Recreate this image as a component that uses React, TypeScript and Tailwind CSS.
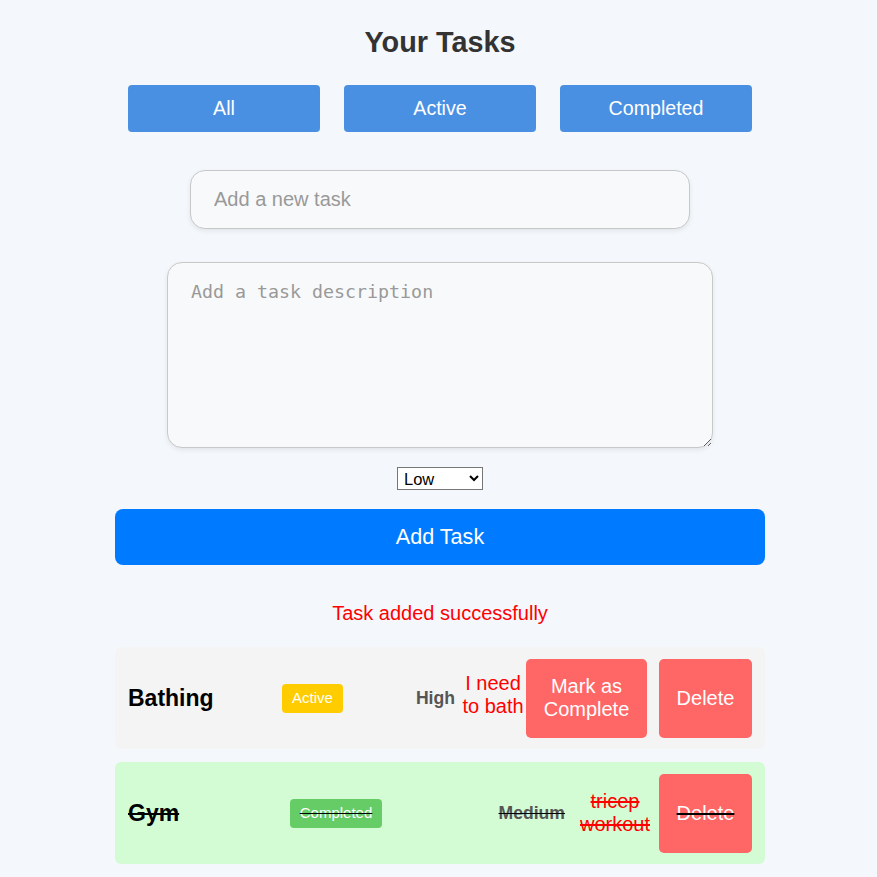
import React, { useState } from 'react';

type Task = {
  title: string;
  status: string;
  priority: string;
  desc: string;
  completed: boolean;
  // per-row column boxes
  titleBox: string;
  badgeBox: string;
  priorityBox: string;
  descBox: string;
  deleteGap: string;
};

const tasks: Task[] = [
  {
    title: 'Bathing',
    status: 'Active',
    priority: 'High',
    desc: 'I need to bath',
    completed: false,
    titleBox: 'w-[154px]',
    badgeBox: 'w-[61px] bg-[#ffcc00]',
    priorityBox: 'w-[118px] pr-[6px]',
    descBox: 'w-[64px] mb-[6px]',
    deleteGap: 'ml-[12px]',
  },
  {
    title: 'Gym',
    status: 'Completed',
    priority: 'Medium',
    desc: 'tricep workout',
    completed: true,
    titleBox: 'w-[162px]',
    badgeBox: 'w-[92px] bg-[#66cc66]',
    priorityBox: 'w-[190px] pr-[7px]',
    descBox: 'w-[86px]',
    deleteGap: 'ml-px',
  },
];

const TaskRow: React.FC<{ task: Task }> = ({ task }) => {
  const strike = task.completed ? 'line-through decoration-black' : '';
  return (
    <li
      className={`flex items-center h-[102px] px-[13px] mb-[13px] rounded-[6px] ${
        task.completed ? 'bg-[#d4fcd4]' : 'bg-[#f4f4f4]'
      }`}
    >
      <span className={`${task.titleBox} shrink-0 text-[23px] font-bold text-black leading-none ${strike}`}>
        {task.title}
      </span>
      <span
        className={`${task.badgeBox} shrink-0 h-[29px] flex items-center justify-center rounded-[4px] text-[15px] text-white ${strike}`}
      >
        {task.status}
      </span>
      <span className={`${task.priorityBox} shrink-0 text-right text-[17.6px] font-bold text-[#555] ${strike}`}>
        {task.priority}
      </span>
      <p
        className={`${task.descBox} shrink-0 text-center text-[20px] leading-[23px] text-[#ff0000] ${
          task.completed ? 'line-through decoration-[#ff0000]' : ''
        }`}
      >
        {task.desc}
      </p>
      {!task.completed && (
        <button className="ml-px w-[121px] h-[79px] shrink-0 rounded-[5px] bg-[#ff6666] text-white text-[20px] leading-[23px]">
          Mark as Complete
        </button>
      )}
      <button
        className={`${task.deleteGap} w-[93px] h-[79px] shrink-0 rounded-[5px] bg-[#ff6666] text-white text-[20px] leading-[23px] ${strike}`}
      >
        Delete
      </button>
    </li>
  );
};

export default function App() {
  const [filter, setFilter] = useState('All');
  const [title, setTitle] = useState('');
  const [desc, setDesc] = useState('');
  const [priority, setPriority] = useState('Low');

  return (
    <div className="min-h-[877px] bg-[#f4f7fc] pl-[3px] pt-[26px] font-['Liberation_Sans',Arial,sans-serif]">
      <div className="w-[650px] mx-auto">
        <h2 className="text-center text-[28.8px] font-bold text-[#333] leading-[33px]">Your Tasks</h2>

        {/* Filters */}
        <div className="flex justify-center gap-[24px] mt-[26px]">
          {['All', 'Active', 'Completed'].map((f) => (
            <button
              key={f}
              onClick={() => setFilter(f)}
              className="w-[192px] h-[47px] rounded-[4px] bg-[#4a90e2] text-white text-[19.6px]"
            >
              {f}
            </button>
          ))}
        </div>

        {/* Form */}
        <input
          type="text"
          value={title}
          onChange={(e) => setTitle(e.target.value)}
          placeholder="Add a new task"
          className="block mx-auto mt-[38px] w-[500px] h-[59px] px-[23px] rounded-[15px] border border-[#c8c8c8] bg-[#f8f9fa] shadow-[0_2px_5px_rgba(0,0,0,0.08)] text-[20px] outline-none placeholder:text-[#999]"
        />
        <textarea
          value={desc}
          onChange={(e) => setDesc(e.target.value)}
          placeholder="Add a task description"
          className="block mx-auto mt-[33px] w-[546px] h-[186px] px-[23px] py-[15px] rounded-[15px] border border-[#c8c8c8] bg-[#f8f9fa] shadow-[0_2px_5px_rgba(0,0,0,0.08)] font-['DejaVu_Sans_Mono',monospace] text-[18.3px] outline-none resize placeholder:text-[#999]"
        />
        <div className="flex justify-center mt-[19px]">
          <select
            value={priority}
            onChange={(e) => setPriority(e.target.value)}
            className="w-[86px] h-[23px] border border-[#767676] bg-white text-black text-[16.5px] pl-[2px]"
          >
            <option>Low</option>
            <option>Medium</option>
            <option>High</option>
          </select>
        </div>
        <button className="block w-full mt-[19px] h-[56px] rounded-[8px] bg-[#007bff] text-white text-[21.6px]">
          Add Task
        </button>

        <p className="mt-[37px] text-center text-[20px] leading-[23px] text-[#ff0000]">Task added successfully</p>

        <ul className="mt-[22px]">
          {tasks.map((t) => (
            <TaskRow key={t.title} task={t} />
          ))}
        </ul>
      </div>
    </div>
  );
}
